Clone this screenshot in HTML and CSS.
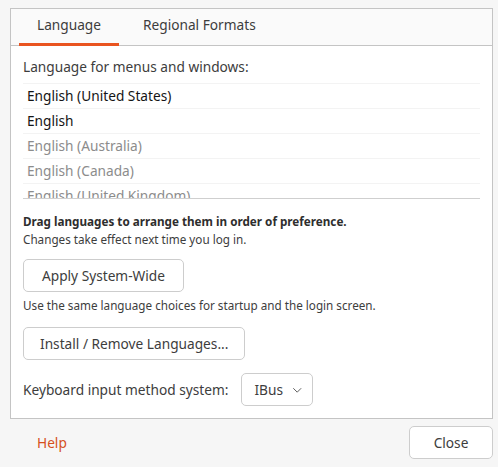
FILE: index.html
```html
<!DOCTYPE html>
<html lang="en">
<head>
    <meta charset="UTF-8">
    <title>Language Support</title>
    <link rel="stylesheet" href="styles.css">
</head>
<body>
    <div class="dialog">
        <div class="notebook">
            <div class="tabs">
                <div class="tab active">Language</div>
                <div class="tab">Regional Formats</div>
            </div>
            <div class="page">
                <p class="list-title">Language for menus and windows:</p>
                <div class="lang-list">
                    <div class="lang-row">English (United States)</div>
                    <div class="lang-row">English</div>
                    <div class="lang-row dim">English (Australia)</div>
                    <div class="lang-row dim">English (Canada)</div>
                    <div class="lang-row dim">English (United Kingdom)</div>
                </div>
                <p class="hint"><b>Drag languages to arrange them in order of preference.</b><br>
                Changes take effect next time you log in.</p>
                <button class="btn apply">Apply System-Wide</button>
                <p class="note">Use the same language choices for startup and the login screen.</p>
                <button class="btn install">Install / Remove Languages...</button>
                <div class="im-row">
                    <span>Keyboard input method system:</span>
                    <button class="btn combo">IBus
                        <svg width="12" height="12" viewBox="0 0 12 12"><path d="M1.5 4 L6 8.5 L10.5 4" fill="none" stroke="#555" stroke-width="1.1"/></svg>
                    </button>
                </div>
            </div>
        </div>
        <div class="footer">
            <a class="help">Help</a>
            <button class="btn close">Close</button>
        </div>
    </div>
</body>
</html>
```

FILE: styles.css
```css
body {
    margin: 0;
    background: #f6f6f6;
    font-family: "Noto Sans", sans-serif;
    font-size: 13.7px;
    color: #3d3d3d;
}

.dialog {
    padding: 8px 5px 0 10px;
}

.notebook {
    border: 1px solid #c4c4c4;
    background: #fff;
}

.tabs {
    display: flex;
    gap: 6px;
    height: 36px;
    padding-left: 8px;
    background: #fafafa;
    border-bottom: 1px solid #c4c4c4;
}

.tab {
    display: flex;
    align-items: center;
    padding: 0 18px 3px;
    color: #3d3d3d;
    border-bottom: 3px solid transparent;
    margin-bottom: -1px;
}

.tab.active {
    border-bottom-color: #e95420;
}

.page {
    padding: 0 12px 12px;
}

.list-title {
    margin: 0;
    height: 37px;
    line-height: 42px;
}

.lang-list {
    height: 115px;
    overflow: hidden;
    border-bottom: 1px solid #cfcfcf;
}

.lang-row {
    height: 24px;
    line-height: 23px;
    padding-left: 4px;
    border-top: 1px solid #f3f3f3;
    color: #151515;
}

.lang-row.dim {
    color: #8c8c8c;
}

.hint {
    margin: 13px 0 0;
    font-size: 11.7px;
    line-height: 18px;
}

.hint b {
    color: #2e2e2e;
}

.btn {
    font-family: inherit;
    font-size: 13.7px;
    color: #3d3d3d;
    background: #fff;
    border: 1px solid #cdcdcd;
    border-radius: 5px;
    height: 33px;
    padding: 0 16px;
}

.apply {
    display: block;
    margin-top: 11px;
    padding: 0 18px;
}

.note {
    margin: 5px 0 0;
    font-size: 11.7px;
    line-height: 17px;
}

.install {
    display: block;
    margin-top: 13px;
}

.im-row {
    display: flex;
    align-items: center;
    gap: 13px;
    margin-top: 13px;
}

.combo {
    display: flex;
    align-items: center;
    gap: 9px;
    width: 72px;
    padding: 0 10px 0 12px;
}

.footer {
    display: flex;
    justify-content: space-between;
    align-items: center;
    padding: 7px 0 0 27px;
}

.help {
    color: #d5501c;
}

.close {
    width: 84px;
}
```
